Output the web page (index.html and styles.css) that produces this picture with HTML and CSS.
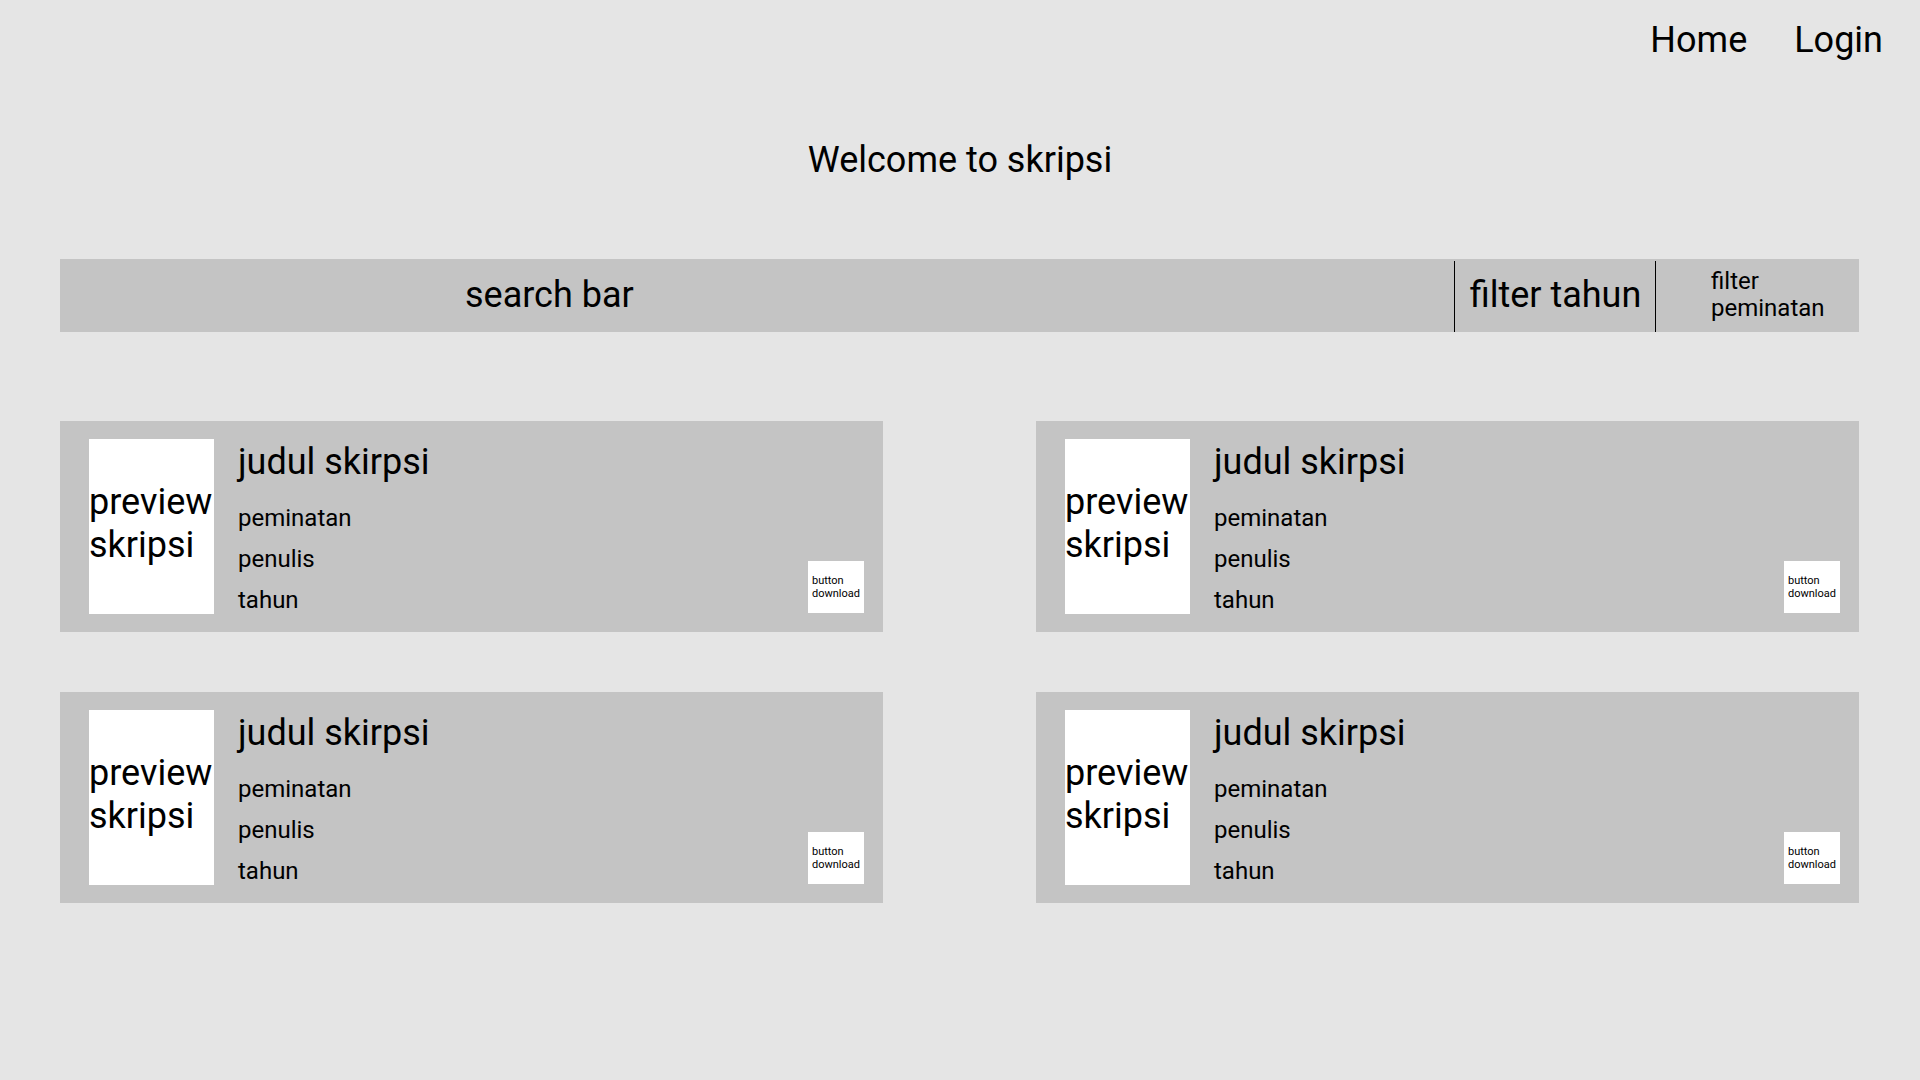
FILE: index.html
```html
<!DOCTYPE html>
<html lang="id">
<head>
<meta charset="utf-8">
<title>skripsi</title>
<link rel="stylesheet" href="styles.css">
</head>
<body>
<header class="nav">
  <a class="nav-link" href="#">Home</a>
  <a class="nav-link" href="#">Login</a>
</header>
<h1 class="welcome">Welcome to skripsi</h1>
<div class="search">
  <div class="search-input">search bar</div>
  <div class="divider"></div>
  <div class="filter-tahun">filter tahun</div>
  <div class="divider"></div>
  <div class="filter-peminatan">filter<br>peminatan</div>
</div>
<main class="cards">
  <div class="card">
    <div class="preview">preview<br>skripsi</div>
    <div class="info">
      <div class="title">judul skirpsi</div>
      <div class="meta">peminatan</div>
      <div class="meta">penulis</div>
      <div class="meta">tahun</div>
    </div>
    <div class="download">button<br>download</div>
  </div>
  <div class="card">
    <div class="preview">preview<br>skripsi</div>
    <div class="info">
      <div class="title">judul skirpsi</div>
      <div class="meta">peminatan</div>
      <div class="meta">penulis</div>
      <div class="meta">tahun</div>
    </div>
    <div class="download">button<br>download</div>
  </div>
  <div class="card">
    <div class="preview">preview<br>skripsi</div>
    <div class="info">
      <div class="title">judul skirpsi</div>
      <div class="meta">peminatan</div>
      <div class="meta">penulis</div>
      <div class="meta">tahun</div>
    </div>
    <div class="download">button<br>download</div>
  </div>
  <div class="card">
    <div class="preview">preview<br>skripsi</div>
    <div class="info">
      <div class="title">judul skirpsi</div>
      <div class="meta">peminatan</div>
      <div class="meta">penulis</div>
      <div class="meta">tahun</div>
    </div>
    <div class="download">button<br>download</div>
  </div>
</main>
</body>
</html>
```

FILE: styles.css
```css
* { box-sizing: border-box; }

html, body {
  margin: 0;
  padding: 0;
  background: #e5e5e5;
  color: #000;
  font-family: Roboto, "Liberation Sans", sans-serif;
}

body {
  width: 1920px;
  height: 1080px;
  overflow: hidden;
}

.nav {
  display: flex;
  justify-content: flex-end;
  gap: 47px;
  padding: 19px 37px 0 0;
}

.nav-link {
  font-size: 36px;
  line-height: 42px;
  color: #000;
  text-decoration: none;
}

.welcome {
  margin: 78px 0 0 0;
  font-size: 36px;
  line-height: 42px;
  font-weight: 400;
  text-align: center;
}

.search {
  display: flex;
  align-items: center;
  height: 73px;
  margin: 78px 61px 0 60px;
  padding-bottom: 2px;
  background: #c4c4c4;
}

.search-input {
  flex: 1;
  padding-left: 405px;
  font-size: 36px;
  line-height: 42px;
}

.divider {
  width: 1px;
  align-self: stretch;
  margin-top: 2px;
  margin-bottom: -2px;
  background: #000;
}

.filter-tahun {
  width: 200px;
  padding-left: 1px;
  text-align: center;
  font-size: 36px;
  line-height: 42px;
}

.filter-peminatan {
  width: 203px;
  padding-left: 55px;
  font-size: 24px;
  line-height: 27px;
}

.cards {
  display: grid;
  grid-template-columns: 823px 823px;
  column-gap: 153px;
  row-gap: 60px;
  margin: 89px 61px 0 60px;
}

.card {
  display: flex;
  height: 211px;
  padding: 18px 19px 18px 29px;
  background: #c4c4c4;
}

.preview {
  flex: none;
  width: 125px;
  height: 175px;
  padding-top: 42px;
  background: #fff;
  font-size: 36px;
  line-height: 42.5px;
}

.info {
  flex: 1;
  margin-left: 24px;
  padding-top: 2px;
}

.title {
  font-size: 36px;
  line-height: 42px;
  margin-bottom: 15px;
}

.meta {
  font-size: 24px;
  line-height: 40.8px;
}

.download {
  flex: none;
  align-self: flex-end;
  display: flex;
  align-items: center;
  width: 56px;
  height: 52px;
  margin-bottom: 1px;
  padding-left: 4px;
  padding-top: 1px;
  background: #fff;
  font-size: 11px;
  line-height: 12.5px;
}
```
